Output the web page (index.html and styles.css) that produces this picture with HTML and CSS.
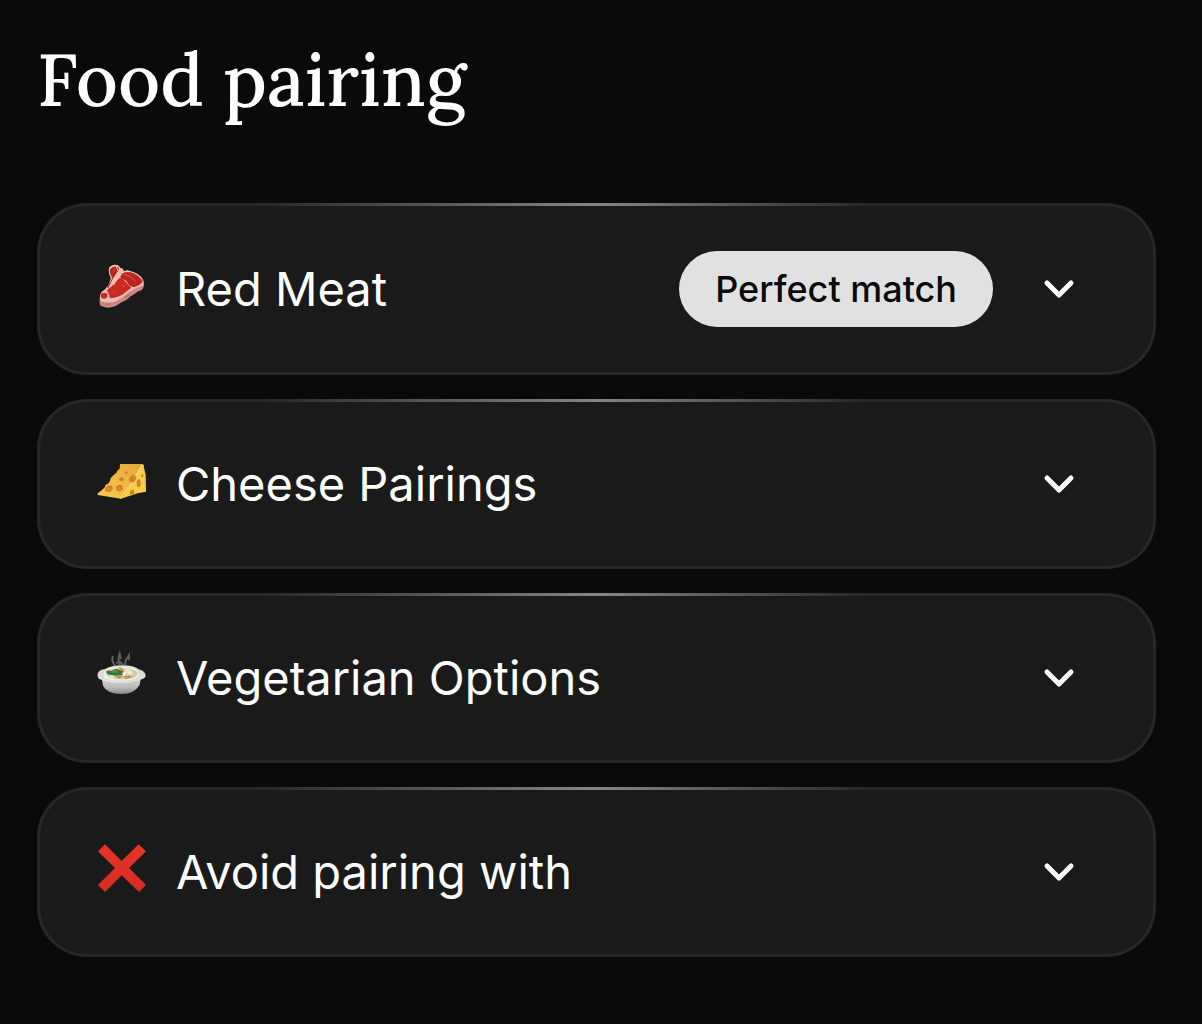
FILE: index.html
```html
<!DOCTYPE html>
<html lang="en">
<head>
<meta charset="utf-8">
<meta name="viewport" content="width=device-width, initial-scale=1">
<title>Food pairing</title>
<link rel="stylesheet" href="styles.css">
</head>
<body>
<main class="page">
  <h1 class="heading">Food pairing</h1>
  <div class="list">
    <button class="card" type="button" aria-expanded="false">
      <svg class="emoji" viewBox="33 27 150 168" aria-hidden="true">
        <path fill="#c98880" d="M69 49Q73 40 86 38L96 40L103 48L111 51L113 58L124 55L141 60Q160 67 169 80Q175 88 174 101Q170 116 157 118L144 127L132 134Q122 146 107 151L89 162Q70 170 57 166L44 162Q39 154 41 144L42 128Q46 119 58 112L68 98L75 79Q66 61 69 49Z"/>
        <path fill="#ecbfb6" d="M69 49Q73 40 86 38L96 40L103 48L111 51L113 58L124 55L141 60Q160 67 169 80Q174 88 173 94Q170 105 155 106L128 121Q112 137 92 147Q68 155 49 149Q39 143 43 128Q46 119 58 112L68 98L75 79Q66 61 69 49Z"/>
        <path fill="#b8241c" d="M72 52Q81 40 95 45Q102 50 96 60Q92 66 88 73Q80 82 76 94L68 108L62 105L73 90L79 77Q69 65 72 52Z"/>
        <path fill="#bd261d" d="M106 65Q123 56 143 64Q167 76 170 90Q162 100 148 104Q134 108 127 97Q122 85 111 82Q98 80 106 65Z"/>
        <path fill="#c92a20" d="M99 79Q108 76 119 90Q127 99 136 107Q128 113 119 121Q101 138 70 139L62 121Q61 112 75 105Q85 94 99 79Z"/>
        <ellipse cx="54" cy="131" rx="10" ry="9" fill="#c72920"/>
        <path fill="none" stroke="#f0c8c0" stroke-width="3" d="M91 45L97 57L83 79L69 106M112 60L98 76L82 99M64 118L71 139"/>
        <path fill="none" stroke="#df786c" stroke-width="2" d="M114 67L132 73L149 88M84 53L85 60M83 116L85 122M111 98L114 105"/>
        <path fill="none" stroke="#ad554d" stroke-width="2" d="M58 156L72 157M118 135L131 128"/>
      </svg>
      <span class="title">Red Meat</span>
      <span class="badge">Perfect match</span>
      <svg class="chevron" viewBox="0 0 48 48" aria-hidden="true"><path d="M12 18L24 30L36 18"/></svg>
    </button>
    <button class="card" type="button" aria-expanded="false">
      <svg class="emoji" viewBox="33 19 150 168" aria-hidden="true">
        <defs>
          <linearGradient id="cheese-top" x1="0" y1="1" x2="1" y2="0"><stop offset="0" stop-color="#f8c950"/><stop offset="1" stop-color="#e5a736"/></linearGradient>
        </defs>
        <path fill="url(#cheese-top)" d="M102 43L167 43L174 47L105 147L35 136L35 131L47 122L57 112Q57 104 65 103L72 94Q74 82 83 76L91 69Q93 61 101 57Z"/>
        <path fill="#f9cd4b" d="M172 46L179 76L180 126L155 131L105 147L132 112Z"/>
        <path fill="#fbd864" d="M168 44L174 47L134 111L105 147L101 145L127 111Z"/>
        <g fill="#ce812b">
          <ellipse cx="69" cy="117" rx="12" ry="9" transform="rotate(-25 69 117)"/>
          <ellipse cx="100" cy="115" rx="11" ry="9" transform="rotate(-25 100 115)"/>
          <ellipse cx="107" cy="89" rx="7" ry="6"/>
          <ellipse cx="121" cy="69" rx="4" ry="4"/>
          <ellipse cx="140" cy="87" rx="9" ry="12" transform="rotate(35 140 87)"/>
          <ellipse cx="158" cy="101" rx="6" ry="12"/>
          <ellipse cx="169" cy="78" rx="3" ry="5"/>
          <path d="M132 124Q141 117 144 122L145 132L131 136Z"/>
        </g>
        <g fill="#d68e35">
          <ellipse cx="67" cy="119" rx="7" ry="5"/>
          <ellipse cx="98" cy="117" rx="7" ry="5"/>
          <ellipse cx="143" cy="83" rx="4" ry="7"/>
        </g>
      </svg>
      <span class="title">Cheese Pairings</span>
      <svg class="chevron" viewBox="0 0 48 48" aria-hidden="true"><path d="M12 18L24 30L36 18"/></svg>
    </button>
    <button class="card" type="button" aria-expanded="false">
      <svg class="emoji" viewBox="33 22 150 168" aria-hidden="true">
        <defs>
          <linearGradient id="bowl" x1="0" y1="0" x2="0" y2="1"><stop offset="0" stop-color="#d6d6d3"/><stop offset=".6" stop-color="#bbbcba"/><stop offset="1" stop-color="#858786"/></linearGradient>
        </defs>
        <g fill="none" stroke="#8c8c8c" stroke-width="6" stroke-linecap="round" opacity=".6">
          <path d="M86 68Q76 54 80 42"/><path d="M101 66Q94 50 101 33L104 47"/><path d="M117 66L119 53L129 38L129 50"/><path d="M92 60L103 58L110 66"/>
        </g>
        <path fill="url(#bowl)" d="M47 106L165 104L161 127Q145 154 107 154Q63 154 51 129Z"/>
        <path fill="#d9dad7" d="M36 90Q42 81 56 80Q75 68 109 68Q144 68 158 80Q177 85 179 98Q179 106 167 110L153 113Q139 120 108 120Q72 121 57 114L39 109Q32 101 36 90Z"/>
        <path fill="#f0f0ea" d="M55 84Q70 71 108 72Q144 72 154 84Q166 103 147 108Q127 116 95 114Q60 114 54 102Z"/>
        <path fill="#d3c8ae" d="M59 85Q80 76 113 77Q144 78 154 89Q158 102 140 106Q116 112 87 108Q58 106 59 85Z"/>
        <path fill="#2f7b34" d="M61 84L77 84L91 78L101 82L112 86L112 97L96 97L88 100L75 98L63 93Z"/>
        <path fill="#50913e" d="M70 87L92 82L101 89L83 90Z"/>
        <path fill="#dc8850" d="M97 73L109 76L114 85L104 84Z"/>
        <path fill="#f0e6c8" d="M116 78L128 78L142 91L134 98L120 91ZM70 97L87 99L82 106L70 104Z"/>
        <path fill="#cf8a4a" d="M88 100L103 96L109 102L98 108ZM111 101L133 99L139 104L119 109Z"/>
        <path fill="#fff" d="M107 91L121 88L115 101Z"/>
        <path fill="none" stroke="#eeeeea" stroke-width="2" d="M38 105L57 113Q107 127 155 112L176 104"/>
      </svg>
      <span class="title">Vegetarian Options</span>
      <svg class="chevron" viewBox="0 0 48 48" aria-hidden="true"><path d="M12 18L24 30L36 18"/></svg>
    </button>
    <button class="card" type="button" aria-expanded="false">
      <svg class="emoji" viewBox="33 30 150 168" aria-hidden="true">
        <defs>
          <linearGradient id="cross" x1="0" y1="0" x2="0" y2="1"><stop offset="0" stop-color="#e93426"/><stop offset="1" stop-color="#d32d20"/></linearGradient>
        </defs>
        <path fill="url(#cross)" d="M57 31L107 81L158 31L180 52L129 102L180 153L159 174L107 124L57 174L36 153L87 102L36 52Z"/>
      </svg>
      <span class="title">Avoid pairing with</span>
      <svg class="chevron" viewBox="0 0 48 48" aria-hidden="true"><path d="M12 18L24 30L36 18"/></svg>
    </button>
  </div>
</main>
</body>
</html>
```
FILE: styles.css
```css
* {
  box-sizing: border-box;
}

body {
  margin: 0;
  background: #0a0a0a;
  color: #fff;
  font-family: Inter, "Liberation Sans", sans-serif;
}

.page {
  padding: 32px 46px 68px 37px;
}

.heading {
  margin: 0 0 75px;
  font-family: Lora, "Liberation Serif", serif;
  font-size: 73px;
  font-weight: 500;
  line-height: 96px;
}

.list {
  display: grid;
  gap: 24px;
}

.card {
  display: flex;
  align-items: center;
  width: 100%;
  min-height: 170px;
  padding: 45px 70px 45px 57px;
  border: 3px solid transparent;
  border-radius: 50px;
  background:
    linear-gradient(#1a1a1a, #1a1a1a) padding-box,
    linear-gradient(90deg, #272727 20%, #858585 50%, #272727 74%) top / 100% 3px no-repeat border-box,
    linear-gradient(#272727, #272727) border-box;
  color: inherit;
  font: inherit;
  text-align: left;
  cursor: pointer;
}

.emoji {
  flex: none;
  width: 50px;
  height: 56px;
}

.title {
  flex: 1;
  margin-left: 29px;
  font-size: 47px;
  font-weight: 400;
  line-height: 60px;
}

.badge {
  padding: 16px 36px;
  border-radius: 38px;
  background: #e1e1e1;
  color: #0a0a0a;
  font-size: 36px;
  font-weight: 500;
  line-height: 44px;
}

.chevron {
  flex: none;
  width: 48px;
  height: 48px;
  margin-left: 42px;
  fill: none;
  stroke: #fff;
  stroke-width: 5;
  stroke-linecap: round;
  stroke-linejoin: round;
}
```
